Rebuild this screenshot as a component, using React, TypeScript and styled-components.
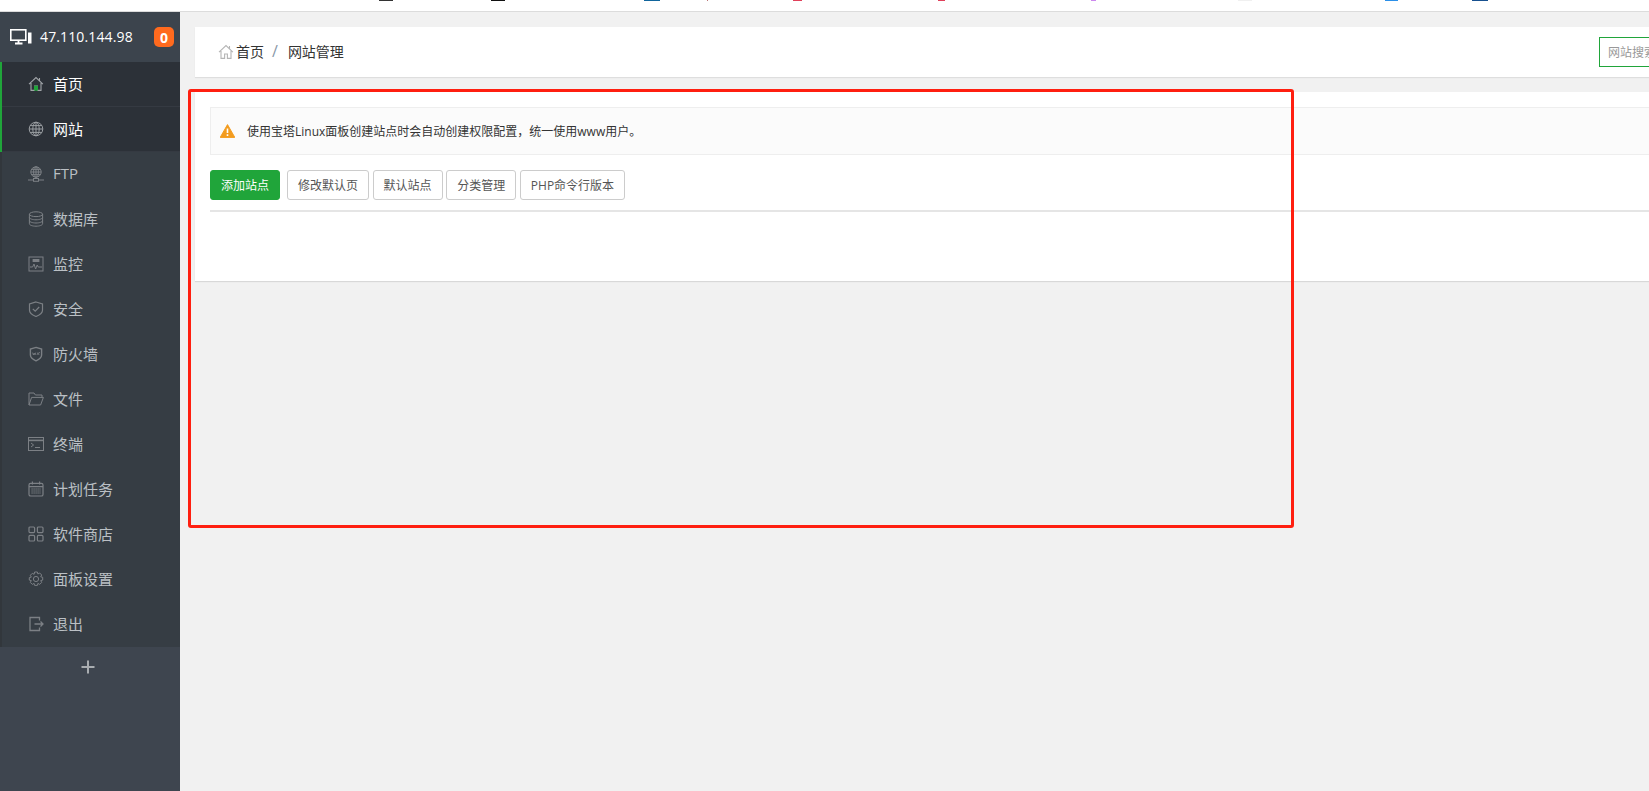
import React from 'react'
import styled, { createGlobalStyle } from 'styled-components'

const GlobalStyle = createGlobalStyle`
  html, body {
    margin: 0;
    padding: 0;
    height: 100%;
    overflow: hidden;
    background: #f1f1f1;
    font-family: 'Open Sans', 'Noto Sans CJK SC', sans-serif;
    font-size: 12px;
    color: #333;
  }
  * { box-sizing: border-box; }
`

const Icon = ({ children }: { children: React.ReactNode }) => (
  <svg width="16" height="16" viewBox="0 0 16 16" fill="none" stroke="#7c8085" strokeWidth="1">
    {children}
  </svg>
)

const HomeIcon = ({ door = '#20a53a', color = '#a0a4a8' }: { door?: string; color?: string }) => (
  <svg width="16" height="16" viewBox="0 0 16 16" fill="none" stroke={color} strokeWidth="1.1">
    <path d="M1 8.2 8 1.6l6.9 6.6M3 7v7.4h3.6V10h2.8v4.4H13V7M11.5 2v2.4" />
    <path d="M6.6 14.6V10.400h2.800v4.200" fill={door} stroke={door} />
  </svg>
)

const icons: Record<string, React.ReactNode> = {
  globe: (
    <Icon>
      <circle cx="8" cy="8" r="6.8" stroke="#9a9ea2" />
      <ellipse cx="8" cy="8" rx="3.2" ry="6.8" stroke="#9a9ea2" />
      <path d="M8 1.2v13.6M1.2 8h13.6M2.2 4.6h11.6M2.2 11.4h11.6" stroke="#9a9ea2" />
    </Icon>
  ),
  ftp: (
    <Icon>
      <circle cx="8" cy="6" r="5.2" />
      <ellipse cx="8" cy="6" rx="2.4" ry="5.2" />
      <path d="M8 .8v10.4M2.8 6h10.4M3.4 3.4h9.2M3.4 8.6h9.2M0 14h5.5M10.5 14h5.5M8 11.2v1.3" />
      <rect x="5.5" y="12.5" width="5" height="2.8" />
    </Icon>
  ),
  database: (
    <Icon>
      <ellipse cx="8" cy="3.2" rx="6.6" ry="2.4" />
      <path d="M1.4 3.2v9.600c0 1.300 3 2.400 6.600 2.400s6.600-1.100 6.600-2.400V3.200M1.400 6.400c0 1.300 3 2.400 6.600 2.400s6.600-1.100 6.600-2.400M1.400 9.600c0 1.300 3 2.400 6.600 2.400s6.600-1.100 6.600-2.400" />
    </Icon>
  ),
  monitor: (
    <Icon>
      <rect x="1" y="1" width="14" height="14" />
      <rect x="4.6" y="3" width="6.8" height="3" fill="#7c8085" stroke="none" />
      <path d="M2 11h2.600l1.400-3 1.600 5 1.600-4 1 2H14" />
    </Icon>
  ),
  shield: (
    <Icon>
      <path d="M8 1 14.500 3v6.200c0 2.800-3.200 5-6.500 6.300-3.300-1.300-6.500-3.500-6.500-6.300V3Z" strokeWidth="1.200" />
      <path d="m4.800 7.800 2.400 2.400 4-4.200" strokeWidth="1.200" />
    </Icon>
  ),
  waf: (
    <Icon>
      <path d="M8 1.400 13.600 3v6c0 2.800-2.800 4.600-5.600 5.800C5.200 13.600 2.400 11.800 2.400 9V3Z" strokeWidth="1.400" />
      <path d="M4.600 6.600 5.400 9l.8-2 .8 2 .7-2.400M9 9l1-2.400L11 9M12 6.600h-1" strokeWidth=".8" />
    </Icon>
  ),
  folder: (
    <Icon>
      <path d="M1 14V2h5l1.400 2H14v2.400M1 14h11.600L15.400 6.400H3.600Z" />
    </Icon>
  ),
  terminal: (
    <Icon>
      <rect x=".5" y="1.5" width="15" height="13" />
      <path d="M.5 4.400h15" strokeWidth="1.600" />
      <path d="m3 7 2.600 2L3 11M7 11.500h5" />
    </Icon>
  ),
  calendar: (
    <Icon>
      <rect x="1" y="2.400" width="14" height="12.600" rx="1.600" strokeWidth="1.200" />
      <path d="M1 5.600h14M4.400.6v3M11.600.6v3" strokeWidth="1.200" />
      <path d="M3.400 8h9.200M3.400 10h9.200M3.400 12h9.200" strokeDasharray="1.400 .6" strokeWidth="1.100" />
    </Icon>
  ),
  grid: (
    <Icon>
      <rect x="1" y="1" width="5.600" height="5.600" rx="1" strokeWidth="1.200" />
      <rect x="9.400" y="1" width="5.600" height="5.600" rx="1" strokeWidth="1.200" />
      <rect x="1" y="9.400" width="5.600" height="5.600" rx="1" strokeWidth="1.200" />
      <rect x="9.400" y="9.400" width="5.600" height="5.600" rx="1" strokeWidth="1.200" />
    </Icon>
  ),
  gear: (
    <Icon>
      <path d="m6.600 1 2.800 0 .5 2 1.800-1 2 2-1 1.800 2 .5v2.800l-2 .5 1 1.800-2 2-1.800-1-.5 2H6.600l-.5-2-1.800 1-2-2 1-1.800-2-.5V6.600l2-.5-1-1.800 2-2 1.800 1Z" />
      <circle cx="8" cy="8" r="2.600" />
    </Icon>
  ),
  logout: (
    <Icon>
      <path d="M11.500 4.400V1.500H2v13h9.500v-2.900" strokeWidth="1.300" />
      <path d="M6.500 8h8.500M12.500 5.500 15 8l-2.500 2.500" strokeWidth="1.300" />
    </Icon>
  ),
}

const menuItems = [
  { label: '首页', icon: <HomeIcon />, active: true },
  { label: '网站', icon: icons.globe, active: true },
  { label: 'FTP', icon: icons.ftp },
  { label: '数据库', icon: icons.database },
  { label: '监控', icon: icons.monitor },
  { label: '安全', icon: icons.shield },
  { label: '防火墙', icon: icons.waf },
  { label: '文件', icon: icons.folder },
  { label: '终端', icon: icons.terminal },
  { label: '计划任务', icon: icons.calendar },
  { label: '软件商店', icon: icons.grid },
  { label: '面板设置', icon: icons.gear },
  { label: '退出', icon: icons.logout },
]

// bits of the browser bookmark bar that were cut off by the top of the shot
const stripMarks = [
  { gap: 379, w: 14, color: '#333' },
  { gap: 98, w: 14, color: '#111' },
  { gap: 139, w: 16, color: '#11659c' },
  { gap: 47, w: 1, color: '#b77' },
  { gap: 85, w: 9, color: '#e0405a' },
  { gap: 136, w: 7, color: '#e0405a' },
  { gap: 146, w: 5, color: '#cc88ee' },
  { gap: 142, w: 14, color: '#f0f0f0' },
  { gap: 133, w: 13, color: '#2b8fe8' },
  { gap: 74, w: 16, color: '#17508f' },
]

const buttons = ['修改默认页', '默认站点', '分类管理', 'PHP命令行版本']

export default function App() {
  return (
    <Page>
      <GlobalStyle />
      <TopStrip>
        {stripMarks.map((m, i) => (
          <StripMark key={i} $gap={m.gap} $w={m.w} $color={m.color} />
        ))}
      </TopStrip>
      <Body>
        <Sidebar>
          <ServerHead>
            <svg width="22" height="16" viewBox="0 0 22 16" fill="none">
              <rect x=".8" y=".8" width="15" height="10.400" stroke="#fff" strokeWidth="1.600" />
              <path d="M5 14.500h7.500M8.500 11.500v3" stroke="#fff" strokeWidth="1.800" />
              <rect x="18" y="3.500" width="3.500" height="11" fill="#fff" />
            </svg>
            <ServerIp>47.110.144.98</ServerIp>
            <Badge>0</Badge>
          </ServerHead>
          <Menu>
            {menuItems.map((item) => (
              <MenuItem key={item.label} $active={!!item.active}>
                <MenuIcon>{item.icon}</MenuIcon>
                <MenuLabel $active={!!item.active}>{item.label}</MenuLabel>
              </MenuItem>
            ))}
          </Menu>
          <AddRow>
            <svg width="14" height="14" viewBox="0 0 14 14" stroke="#a9adb1" strokeWidth="2">
              <path d="M7 .5v13M.5 7h13" />
            </svg>
          </AddRow>
        </Sidebar>
        <Main>
          <BreadcrumbCard>
            <Crumbs>
              <HomeIcon door="none" color="#b5b5b5" />
              <CrumbText>首页</CrumbText>
              <CrumbSep>/</CrumbSep>
              <CrumbText>网站管理</CrumbText>
            </Crumbs>
            <SearchInput placeholder="网站搜索" />
          </BreadcrumbCard>
          <ContentCard>
            <Notice>
              <svg width="15" height="14" viewBox="0 0 15 14">
                <path d="M7.500.6 14.800 13.400H.2Z" fill="#f39c1f" stroke="#f39c1f" strokeLinejoin="round" />
                <path d="M7.500 4.500v4.600M7.500 10.200v1.700" stroke="#fff" strokeWidth="1.600" />
              </svg>
              <NoticeText>使用宝塔Linux面板创建站点时会自动创建权限配置，统一使用www用户。</NoticeText>
            </Notice>
            <Toolbar>
              <PrimaryButton>添加站点</PrimaryButton>
              {buttons.map((b) => (
                <DefaultButton key={b}>{b}</DefaultButton>
              ))}
            </Toolbar>
            <TableRule />
          </ContentCard>
        </Main>
      </Body>
      <Highlight />
    </Page>
  )
}

const Page = styled.div`
  position: relative;
  width: 1649px;
  height: 791px;
  overflow: hidden;
  display: flex;
  flex-direction: column;
`

const TopStrip = styled.div`
  height: 12px;
  flex-shrink: 0;
  background: #fff;
  border-bottom: 1px solid #dcdcdc;
  display: flex;
  align-items: flex-start;
`

const StripMark = styled.span<{ $gap: number; $w: number; $color: string }>`
  height: 1px;
  width: ${(p) => p.$w}px;
  margin-left: ${(p) => p.$gap}px;
  flex-shrink: 0;
  background: ${(p) => p.$color};
`

const Body = styled.div`
  flex: 1;
  display: flex;
  min-height: 0;
`

const Sidebar = styled.aside`
  width: 180px;
  flex-shrink: 0;
  background: #3e454f;
  display: flex;
  flex-direction: column;
`

const ServerHead = styled.div`
  height: 50px;
  display: flex;
  align-items: center;
  padding: 0 6px 0 10px;
  background: #3c444d;
`

const ServerIp = styled.span`
  flex: 1;
  margin-left: 8px;
  padding-bottom: 1px;
  font-size: 14px;
  letter-spacing: 0.13px;
  color: #fff;
`

const Badge = styled.span`
  width: 20px;
  height: 20px;
  border-radius: 5px;
  background: #ff6a1e;
  color: #fff;
  font-size: 14px;
  font-weight: 700;
  display: flex;
  align-items: center;
  justify-content: center;
`

const Menu = styled.nav`
  display: flex;
  flex-direction: column;
`

const MenuItem = styled.div<{ $active: boolean }>`
  height: 45px;
  display: flex;
  align-items: center;
  padding-left: 26px;
  background: ${(p) => (p.$active ? '#2c3138' : '#363d44')};
  border-left: 2px solid ${(p) => (p.$active ? '#20a53a' : '#32373c')};
  box-shadow: inset 0 -1px 0 ${(p) => (p.$active ? '#353a42' : '#363d44')};
`

const MenuIcon = styled.span`
  width: 26px;
  height: 16px;
  margin-bottom: 2px;
  display: flex;
  align-items: center;
`

const MenuLabel = styled.span<{ $active: boolean }>`
  margin-left: -1px;
  padding-bottom: 3px;
  font-size: 15px;
  color: ${(p) => (p.$active ? '#fff' : '#bbc0c5')};
`

const AddRow = styled.div`
  height: 40px;
  display: flex;
  align-items: center;
  justify-content: center;
  padding-right: 5px;
`

const Main = styled.main`
  width: 1599px;
  flex-shrink: 0;
  padding: 15px;
  display: flex;
  flex-direction: column;
  gap: 15px;
`

const BreadcrumbCard = styled.div`
  height: 50px;
  background: #fff;
  box-shadow: 0 1px 1px rgba(0, 0, 0, 0.08);
  display: flex;
  align-items: center;
  justify-content: space-between;
  padding: 0 15px 0 23px;
`

const Crumbs = styled.div`
  display: flex;
  align-items: center;
`

const CrumbText = styled.span`
  padding-bottom: 2px;
  font-size: 14px;
  color: #333;
  margin-left: 2px;
`

const CrumbSep = styled.span`
  padding-bottom: 2px;
  font-size: 16px;
  color: #8a98a8;
  margin: 0 8px 0 8px;
`

const SearchInput = styled.input`
  width: 150px;
  height: 30px;
  border: 1px solid #20a53a;
  outline: none;
  padding: 0 8px;
  font: inherit;
  &::placeholder {
    color: #999;
  }
`

const ContentCard = styled.section`
  height: 189px;
  background: #fff;
  box-shadow: 0 1px 1px rgba(0, 0, 0, 0.1);
  padding: 15px;
`

const Notice = styled.div`
  height: 48px;
  display: flex;
  align-items: center;
  padding-left: 9px;
  background: #fbfbfb;
  border: 1px solid #eee;
`

const NoticeText = styled.span`
  margin-left: 12px;
  font-size: 12px;
  color: #333;
`

const Toolbar = styled.div`
  margin-top: 15px;
  display: flex;
  gap: 3.6px;
`

const PrimaryButton = styled.button`
  height: 30px;
  padding: 0 10px;
  margin-right: 3.4px;
  font: inherit;
  color: #fff;
  background: #20a53a;
  border: 1px solid #20a53a;
  border-radius: 3px;
`

const DefaultButton = styled.button`
  height: 30px;
  padding: 0 10px;
  font: inherit;
  color: #555;
  background: #fff;
  border: 1px solid #ccc;
  border-radius: 3px;
`

const TableRule = styled.div`
  height: 2px;
  margin-top: 10px;
  background: #e5e5e5;
`

const Highlight = styled.div`
  position: absolute;
  left: 188px;
  top: 89px;
  width: 1106px;
  height: 439px;
  border: 3px solid #ff1f10;
  border-radius: 3px;
  pointer-events: none;
`
